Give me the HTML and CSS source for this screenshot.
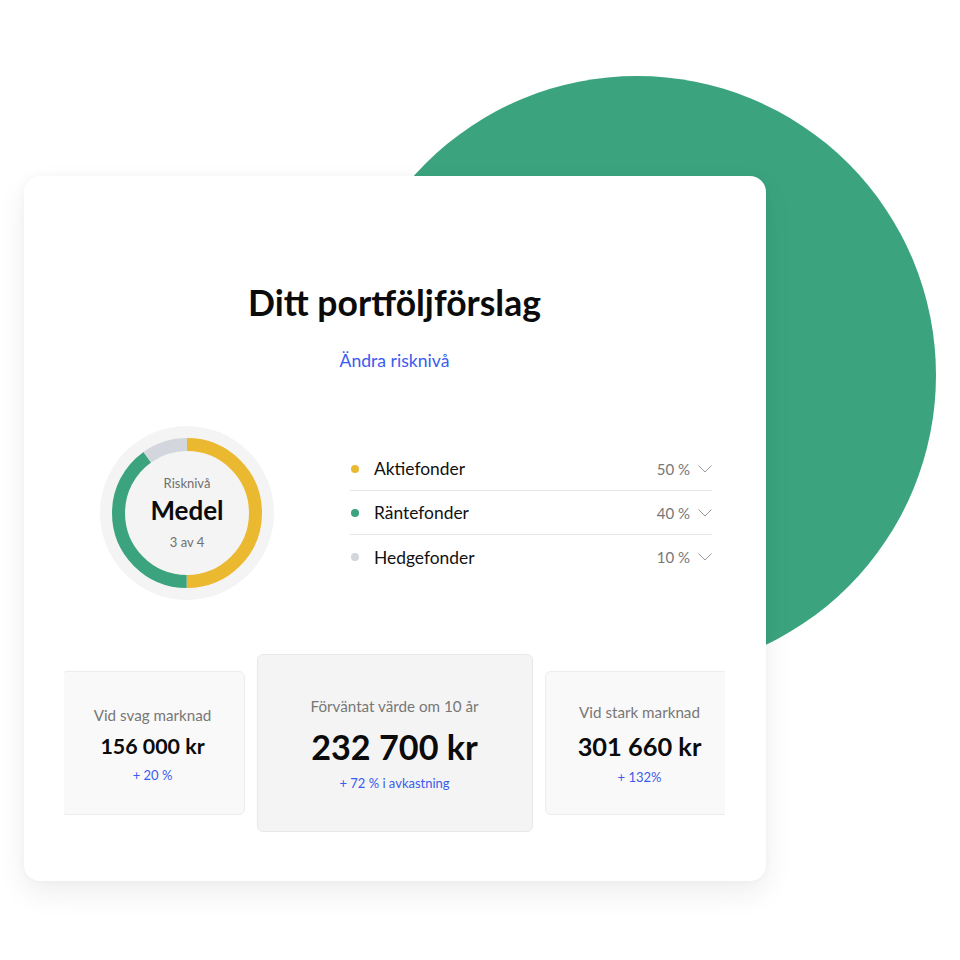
FILE: index.html
```html
<!DOCTYPE html>
<html lang="sv">
<head>
<meta charset="utf-8">
<title>Ditt portföljförslag</title>
<link rel="stylesheet" href="styles.css">
</head>
<body>
<div class="stage">
  <div class="blob"></div>
  <main class="card">
    <h1 class="title">Ditt portföljförslag</h1>
    <a class="link" href="#">Ändra risknivå</a>
    <section class="overview">
      <div class="donut">
        <svg class="donut-svg" viewBox="0 0 174 174" width="174" height="174">
          <circle cx="87" cy="87" r="87" fill="#f4f4f4"/>
          <g transform="rotate(-90 87 87)">
            <circle cx="87" cy="87" r="68.5" fill="none" stroke="#ebb930" stroke-width="13" stroke-dasharray="215.2 430.4" stroke-dashoffset="0"/>
            <circle cx="87" cy="87" r="68.5" fill="none" stroke="#3ba47f" stroke-width="13" stroke-dasharray="172.2 430.4" stroke-dashoffset="-215.2"/>
            <circle cx="87" cy="87" r="68.5" fill="none" stroke="#d3d6dd" stroke-width="13" stroke-dasharray="43.04 430.4" stroke-dashoffset="-387.4"/>
          </g>
        </svg>
        <div class="donut-text">
          <div class="donut-label">Risknivå</div>
          <div class="donut-value">Medel</div>
          <div class="donut-sub">3 av 4</div>
        </div>
      </div>
      <ul class="funds">
        <li class="fund">
          <span class="dot dot-yellow"></span>
          <span class="fund-name">Aktiefonder</span>
          <span class="fund-pct">50 %</span>
          <svg class="chev" viewBox="0 0 14 8" width="14" height="8"><path d="M0.5 0.5 L7 7 L13.5 0.5" fill="none" stroke="#9a9a9a" stroke-width="1"/></svg>
        </li>
        <li class="fund">
          <span class="dot dot-green"></span>
          <span class="fund-name">Räntefonder</span>
          <span class="fund-pct">40 %</span>
          <svg class="chev" viewBox="0 0 14 8" width="14" height="8"><path d="M0.5 0.5 L7 7 L13.5 0.5" fill="none" stroke="#9a9a9a" stroke-width="1"/></svg>
        </li>
        <li class="fund">
          <span class="dot dot-gray"></span>
          <span class="fund-name">Hedgefonder</span>
          <span class="fund-pct">10 %</span>
          <svg class="chev" viewBox="0 0 14 8" width="14" height="8"><path d="M0.5 0.5 L7 7 L13.5 0.5" fill="none" stroke="#9a9a9a" stroke-width="1"/></svg>
        </li>
      </ul>
    </section>
    <section class="carousel">
      <div class="scen scen-side scen-weak">
        <div class="scen-label">Vid svag marknad</div>
        <div class="scen-value">156 000 kr</div>
        <div class="scen-sub">+ 20 %</div>
      </div>
      <div class="scen scen-main">
        <div class="scen-label">Förväntat värde om 10 år</div>
        <div class="scen-value">232 700 kr</div>
        <div class="scen-sub">+ 72 % i avkastning</div>
      </div>
      <div class="scen scen-side scen-strong">
        <div class="scen-label">Vid stark marknad</div>
        <div class="scen-value">301 660 kr</div>
        <div class="scen-sub">+ 132%</div>
      </div>
    </section>
  </main>
</div>
</body>
</html>
```

FILE: styles.css
```css
* { box-sizing: border-box; }
html, body { margin: 0; padding: 0; background: #ffffff; }
body { font-family: Lato, "Open Sans", Arial, sans-serif; color: #111; }

.stage {
  position: relative;
  width: 960px;
  height: 960px;
  overflow: hidden;
  padding-top: 176px;
  padding-left: 24px;
}

.blob {
  position: absolute;
  left: 338px;
  top: 76px;
  width: 598px;
  height: 598px;
  border-radius: 50%;
  background: #3ba47f;
}

.card {
  position: relative;
  width: 742px;
  height: 705px;
  background: #ffffff;
  border-radius: 16px;
  box-shadow: 0 12px 30px rgba(0, 0, 0, 0.07), 0 0 10px rgba(0, 0, 0, 0.03);
  padding: 107px 41px 0 40px;
  display: flex;
  flex-direction: column;
  align-items: center;
}

.title {
  margin: 0;
  font-size: 35.5px;
  line-height: 40px;
  font-weight: 700;
  color: #0b0b0b;
  letter-spacing: 0;
}

.link {
  margin-top: 26px;
  font-size: 17.6px;
  line-height: 24px;
  color: #3a5bef;
  text-decoration: none;
}

.overview {
  align-self: stretch;
  margin-top: 53px;
  display: flex;
  align-items: center;
}

.donut {
  position: relative;
  width: 174px;
  height: 174px;
  margin-left: 36px;
  flex: none;
}
.donut-svg { display: block; }
.donut-text {
  position: absolute;
  inset: 0;
  display: flex;
  flex-direction: column;
  align-items: center;
  justify-content: flex-start;
  padding-top: 49px;
}
.donut-label { font-size: 13px; line-height: 16px; color: #6f6f6f; }
.donut-value { font-size: 26px; line-height: 32px; font-weight: 700; color: #0b0b0b; margin-top: 3px; }
.donut-sub { font-size: 13px; line-height: 16px; color: #6f6f6f; margin-top: 8px; }

.funds {
  list-style: none;
  margin: 0 0 0 76px;
  padding: 0;
  width: 362px;
}
.fund {
  display: flex;
  align-items: center;
  height: 44px;
  border-bottom: 1px solid #e6e6e6;
}
.fund:last-child { border-bottom: none; }
.dot {
  width: 8px;
  height: 8px;
  border-radius: 50%;
  margin-left: 1px;
  flex: none;
}
.dot-yellow { background: #ebb930; }
.dot-green { background: #3ba47f; }
.dot-gray { background: #d3d6dd; }
.fund-name {
  margin-left: 15px;
  font-size: 17.4px;
  color: #111;
  flex: 1;
}
.fund-pct {
  font-size: 15px;
  color: #777;
}
.chev { margin-left: 8px; display: block; }

.carousel {
  align-self: stretch;
  margin-top: 54px;
  height: 178px;
  display: flex;
  justify-content: center;
  align-items: center;
  gap: 12px;
  overflow: hidden;
}
.scen {
  flex: none;
  border-radius: 6px;
  display: flex;
  flex-direction: column;
  align-items: center;
  justify-content: flex-start;
  text-align: center;
}
.scen-side {
  width: 184px;
  height: 144px;
  background: #f9f9f9;
  border: 1px solid #ececec;
}
.scen-main {
  width: 276px;
  height: 178px;
  background: #f4f4f4;
  border: 1px solid #e8e8e8;
  padding-top: 41px;
}
.scen-label { font-size: 15.2px; line-height: 20px; color: #777; }
.scen-value { font-weight: 700; color: #0b0b0b; }
.scen-sub { font-size: 13px; line-height: 18px; color: #3a5bef; }

.scen-side .scen-value { font-size: 21.4px; line-height: 28px; }
.scen-weak { padding-top: 33px; }
.scen-weak .scen-value { margin-top: 7px; }
.scen-weak .scen-sub { margin-top: 6px; }
.scen-strong { padding-top: 30px; padding-left: 6px; }
.scen-strong .scen-value { font-size: 25.4px; line-height: 30px; margin-top: 9px; }
.scen-strong .scen-sub { margin-top: 7px; }
.scen-main .scen-value { font-size: 34.2px; line-height: 40px; margin-top: 11px; }
.scen-main .scen-sub { margin-top: 7px; }
```
